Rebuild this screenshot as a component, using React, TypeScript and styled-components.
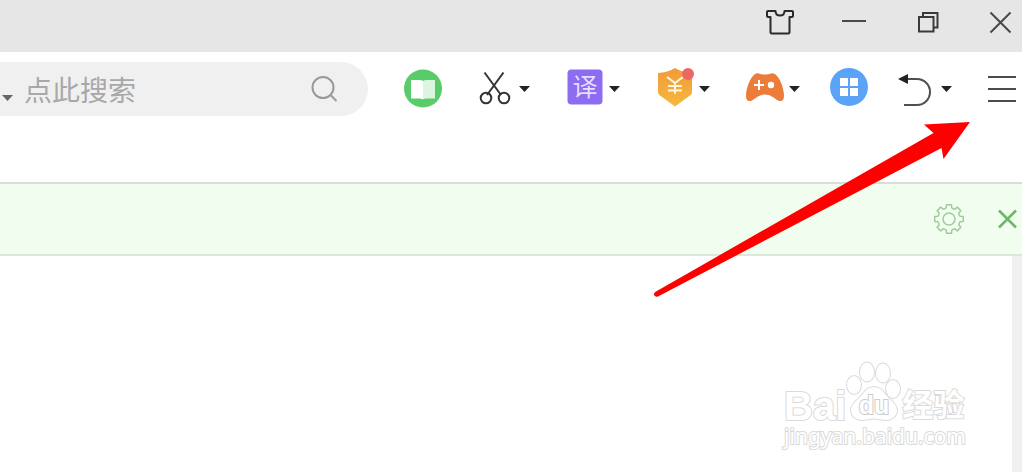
import React from "react";
import styled, { createGlobalStyle } from "styled-components";

const GlobalStyle = createGlobalStyle`
  * { box-sizing: border-box; }
  body {
    margin: 0;
    background: #fff;
    font-family: "Liberation Sans", "Noto Sans CJK SC", sans-serif;
  }
`;

const Page = styled.div`
  position: relative;
  display: flex;
  flex-direction: column;
  min-height: 100vh;
  overflow: hidden;
`;

const TitleBar = styled.header`
  display: flex;
  justify-content: flex-end;
  align-items: center;
  gap: 34px;
  padding: 2px 0 10px;
  background: #e6e6e6;
`;

const IconButton = styled.button`
  display: flex;
  flex: none;
  align-items: center;
  padding: 0;
  border: 0;
  background: none;
  cursor: pointer;
`;

const Icon = styled.svg`
  display: block;
  flex: none;
  width: 40px;
  height: 40px;
  overflow: visible;
  fill: none;
`;

const CaretIcon = styled.svg`
  display: block;
  flex: none;
  width: 20px;
  height: 40px;
`;

const ToolBar = styled.div`
  display: flex;
  align-items: center;
  gap: 26px;
  padding: 10px 0 66px;
`;

const ToolGroup = styled.div`
  display: flex;
  align-items: center;
  gap: 30px;
`;

const SearchBox = styled.form`
  display: flex;
  flex: 1;
  align-items: center;
  min-width: 0;
  height: 54px;
  margin-right: 10px;
  padding-right: 24px;
  border-radius: 0 27px 27px 0;
  background: #f0f0f0;
`;

const SearchInput = styled.input`
  flex: 1;
  min-width: 0;
  height: 54px;
  padding: 0 4px;
  border: 0;
  outline: 0;
  background: none;
  color: #555;
  font-family: "Noto Sans CJK SC", sans-serif;
  font-size: 28px;
  &::placeholder { color: #a8a8a8; opacity: 1; }
`;

const NoticeBar = styled.div`
  display: flex;
  justify-content: flex-end;
  align-items: center;
  gap: 13px;
  height: 74px;
  border-top: 2px solid #dadcda;
  border-bottom: 2px solid #dce9da;
  background: #f1fdef;
`;

const Content = styled.main`
  display: flex;
  flex: 1;
  justify-content: flex-end;
  align-items: flex-end;
`;

const ScrollTrack = styled.div`
  align-self: stretch;
  width: 10px;
  background: #f0f0f0;
`;

const Watermark = styled.div`
  margin: 0 46px 22px 0;
  color: #fff;
  -webkit-text-stroke: 2px #dadada;
  paint-order: stroke;
`;

const Brand = styled.div`
  display: flex;
  align-items: flex-end;
  height: 62px;
  font-weight: 700;
`;

const BrandLatin = styled.span`
  font-size: 40px;
  line-height: 32px;
`;

const BrandHan = styled.span`
  font-family: "Noto Sans CJK SC", sans-serif;
  font-size: 31px;
  line-height: 38px;
`;

const Paw = styled.svg`
  width: 56px;
  height: 62px;
  fill: #fff;
  stroke: #dadada;
  stroke-width: 2px;
`;

const PawText = styled.text`
  font-family: "Liberation Sans", sans-serif;
  font-size: 25px;
  stroke: #cccccc;
`;

const Site = styled.div`
  font-family: "Noto Sans", sans-serif;
  font-size: 21px;
  line-height: 28px;
`;

const Pointer = styled.svg`
  position: absolute;
  top: 116px;
  right: 42px;
  width: 330px;
  height: 190px;
  fill: #f00;
  pointer-events: none;
`;

const Caret = () => (
  <CaretIcon viewBox="0 0 20 40" aria-hidden="true">
    <path d="M5 17h11l-5.500 6z" fill="#222" />
  </CaretIcon>
);

type ToolProps = { label: string; menu?: boolean; children: React.ReactNode };

const Tool = ({ label, menu, children }: ToolProps) => (
  <IconButton type="button" aria-label={label}>
    <Icon viewBox="0 0 40 40">{children}</Icon>
    {menu && <Caret />}
  </IconButton>
);

// Outline of an eight-toothed cog centred in the 40x40 icon box.
const gearPath =
  Array.from({ length: 8 }, (_, i) => {
    const at = (r: number, deg: number) => {
      const a = ((i * 45 + deg) * Math.PI) / 180;
      return `${(20 + r * Math.sin(a)).toFixed(2)} ${(20 - r * Math.cos(a)).toFixed(2)}`;
    };
    return `${i ? "L" : "M"}${at(11.5, -14)}L${at(14.5, -10)}L${at(14.5, 10)}L${at(11.5, 14)}Q${at(10.6, 22.5)} ${at(11.5, 31)}`;
  }).join("") + "Z";

export default function App() {
  return (
    <>
      <GlobalStyle />
      <Page>
        <TitleBar>
          <Tool label="皮肤">
            <path
              d="M8 9h7.500c0 3 2 4.500 4.500 4.500s4.500-1.500 4.500-4.500h7.500q1 0 1 1v4q0 1-1 1h-2.500v15q0 1.500-1.500 1.500h-16q-1.500 0-1.500-1.500v-15h-2.500q-1 0-1-1v-4q0-1 1-1z"
              stroke="#2b2b2b"
              strokeWidth="2"
              strokeLinejoin="round"
            />
          </Tool>
          <Tool label="最小化">
            <path d="M8 19h24" stroke="#4a4a4a" strokeWidth="2" />
          </Tool>
          <Tool label="还原">
            <path d="M11 15h14.500v14.500h-14.500zM15 15v-4h14.500v14.500h-4" stroke="#3a3a3a" strokeWidth="2" />
          </Tool>
          <Tool label="关闭">
            <path d="M8.500 10.500l20 20M28.500 10.500l-20 20" stroke="#484848" strokeWidth="2" />
          </Tool>
        </TitleBar>

        <ToolBar>
          <SearchBox role="search" onSubmit={(e) => e.preventDefault()}>
            <IconButton type="button" aria-label="搜索引擎">
              <CaretIcon viewBox="0 0 20 40">
                <path d="M2 26h11l-5.500 6z" fill="#666" />
              </CaretIcon>
            </IconButton>
            <SearchInput type="text" placeholder="点此搜索" aria-label="搜索" />
            <IconButton type="submit" aria-label="搜索">
              <Icon viewBox="0 0 40 40">
                <circle cx="19" cy="18.500" r="10.500" stroke="#999" strokeWidth="2" />
                <path d="M26.500 26l6 6" stroke="#999" strokeWidth="2" />
              </Icon>
            </IconButton>
          </SearchBox>

          <ToolGroup>
            <Tool label="阅读">
              <circle cx="19" cy="19.500" r="19" fill="#57cc68" />
              <path d="M7 11h9q3 0 3 1.500v18.500q0-1.500-3-1.500h-9z" fill="#fff" />
              <path d="M31 11h-9q-3 0-3 1.500v18.500q0-1.500 3-1.500h9z" fill="#dcf5e0" />
            </Tool>
            <Tool label="截图" menu>
              <g stroke="#333" strokeWidth="2">
                <path d="M10.500 3.500l16.500 22.500M29.500 3.500l-16.500 22.500" />
                <circle cx="12" cy="29" r="5.300" />
                <circle cx="30" cy="29" r="5.300" />
              </g>
            </Tool>
            <Tool label="翻译" menu>
              <rect x="3.500" y="0.500" width="35" height="35" rx="4" fill="#8c6cf0" />
              <text
                x="21"
                y="27"
                textAnchor="middle"
                fontFamily="Noto Sans CJK SC, sans-serif"
                fontSize="25"
                fill="#e6deff"
              >
                译
              </text>
            </Tool>
            <Tool label="优惠" menu>
              <defs>
                <linearGradient id="shield" x1="0" y1="0" x2="0" y2="1">
                  <stop offset="0" stopColor="#f09a3a" />
                  <stop offset="1" stopColor="#f6b83c" />
                </linearGradient>
              </defs>
              <path d="M21 -1c5 3 10 4.500 17 5v19q0 2-2 3.500l-15 11-15-11q-2-1.500-2-3.500v-19c7-.500 12-2 17-5z" fill="url(#shield)" />
              <path d="M13 8l8 6 8-6M21 14v11M14 17h14M14 21.500h14" stroke="#fff6e0" strokeWidth="2" />
              <circle cx="34" cy="5" r="6" fill="#ed6863" />
            </Tool>
            <Tool label="游戏" menu>
              <path
                d="M11 5q1.500-1 4-.500c2 .700 3.500 1 6 1s4-.300 6-1q2.500-.500 4 .500c5 4 8.500 13 9 21 .200 6-2.500 7-6 5.500-4.500-3-8-6-13-6s-8.500 3-13 6c-3.500 1.500-6.200.500-6-5.500.500-8 4-17 9-21z"
                fill="#ec7c3a"
              />
              <path d="M10 16h10M15 11v10" stroke="#fff" strokeWidth="2" />
              <circle cx="27" cy="16" r="3.200" fill="#fff" />
            </Tool>
          </ToolGroup>

          <Tool label="应用">
            <circle cx="19" cy="18" r="19" fill="#5ba3f7" />
            <path d="M10 9h8v8h-8zM20 9h8v8h-8zM10 19h8v8h-8zM20 19h8v8h-8z" fill="#fff" />
          </Tool>
          <Tool label="撤销" menu>
            <path d="M8 10h13a13 13 0 0 1 0 26h-13" stroke="#505050" strokeWidth="2" />
            <path d="M2 10l10-5v10z" fill="#222" />
          </Tool>
          <Tool label="菜单">
            <path d="M6 8h28M6 20h28M6 32h28" stroke="#4c4c4c" strokeWidth="2" />
          </Tool>
        </ToolBar>

        <NoticeBar>
          <Tool label="设置">
            <g stroke="#a0cc9c" strokeWidth="1.500">
              <path d={gearPath} strokeLinejoin="round" />
              <circle cx="20" cy="20" r="6" />
            </g>
          </Tool>
          <Tool label="关闭提示">
            <path d="M17 11.500l17 17M34 11.500l-17 17" stroke="#6cb868" strokeWidth="2.500" />
          </Tool>
        </NoticeBar>

        <Content>
          <Watermark>
            <Brand>
              <BrandLatin>Bai</BrandLatin>
              <Paw viewBox="0 0 56 62">
                <ellipse cx="8" cy="25" rx="7" ry="9" />
                <ellipse cx="21" cy="12" rx="7" ry="9.500" />
                <ellipse cx="37" cy="13" rx="7" ry="9.500" />
                <ellipse cx="47" cy="29" rx="7" ry="9" />
                <path d="M28 27c6 0 9 4 12 8 4 5 11 9 11 15 0 6-5 10-11 10-4 0-8-1.500-12-1.500s-8 1.500-12 1.500c-6 0-11-4-11-10 0-6 7-10 11-15 3-4 6-8 12-8z" />
                <PawText x="28" y="54" textAnchor="middle">du</PawText>
              </Paw>
              <BrandHan>经验</BrandHan>
            </Brand>
            <Site>jingyan.baidu.com</Site>
          </Watermark>
          <ScrollTrack />
        </Content>

        <Pointer viewBox="650 116 330 190" aria-hidden="true">
          <path d="M970 122l-46 2.500 9.500 8.500-277.500 158.500q-2.500 1.500-2 3.500 1.500 2.500 4 1.500l283.500-148.500 2 11z" />
        </Pointer>
      </Page>
    </>
  );
}
